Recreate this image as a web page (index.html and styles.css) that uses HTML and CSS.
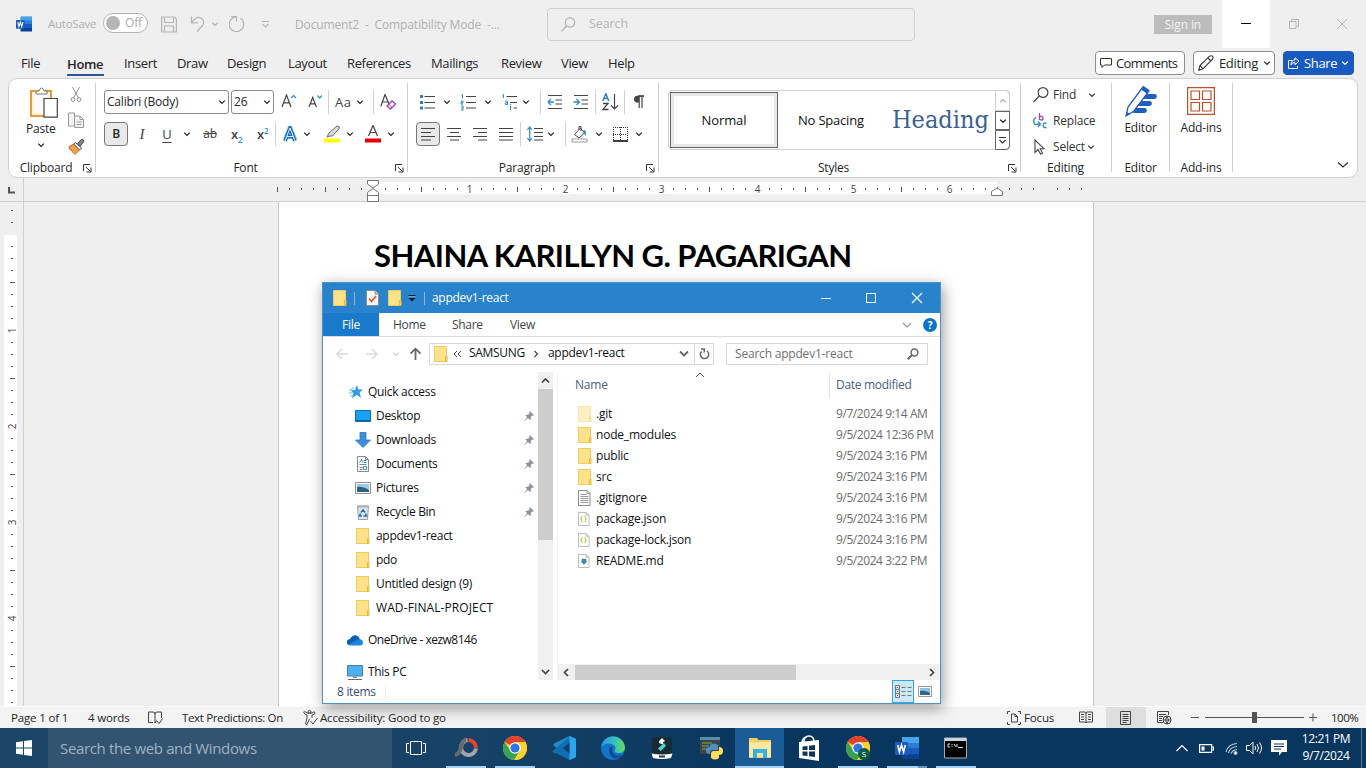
FILE: index.html
```html
<!DOCTYPE html>
<html lang="en">
<head>
<meta charset="utf-8">
<title>Document2 - Word</title>
<link rel="stylesheet" href="styles.css">
</head>
<body>
<svg class="defs" width="0" height="0">
  <defs>
    <symbol id="chev" viewBox="0 0 8 8"><path d="M1.2 2.6 4 5.4 6.8 2.6" fill="none" stroke="currentColor" stroke-width="1.3"/></symbol>
    <symbol id="folder" viewBox="0 0 14 16"><path d="M.5.5h12v15H.5z" fill="#ffe28a" stroke="#eccb5f"/><path d="M11.500 10.500h1.500v5h-1.500z" fill="#ffe28a" stroke="#e3b93c"/></symbol>
    <symbol id="pin" viewBox="0 0 12 12"><path d="M6.500 0 11 4.500 9.800 5.200 9 5 7.300 6.800 7.500 9 6.500 9.800 4.300 7.600.8 11 .3 10.500 3.400 6.800 1.500 4.800 2.400 4 4.500 4 6.200 2.200 5.900 1z" fill="#8b959d"/></symbol>
    <symbol id="launch" viewBox="0 0 9 9"><path d="M.5 7V.5H7M3 3l4.500 4.500M8 3.500V8H3.500" fill="none" stroke="#333"/></symbol>
    <symbol id="json" viewBox="0 0 13 15"><path d="M.5.500h8.500l3 3v11H.5z" fill="#fff" stroke="#b5b5b5"/><path d="M9 .5v3h3" fill="#e6e6e6" stroke="#b5b5b5"/><path d="M5 4.500q-1 0-1 1.200T3.200 7.500Q4 8 4 9.300T5 10.500M7 4.500q1 0 1 1.200T8.800 7.500Q8 8 8 9.300T7 10.500" fill="none" stroke="#b9c657" stroke-width="1.200"/></symbol>
    <symbol id="chrome" viewBox="0 0 24 24"><circle cx="12" cy="12" r="12" fill="#fdd12e"/><path d="M12 12 1.600 6A12 12 0 0 1 22.400 6z" fill="#e5402f"/><path d="M1.600 6A12 12 0 0 0 11 24l6-9.500L7 14z" fill="#35a353"/><path d="M12 6h10.400A12 12 0 0 1 11.500 24l5.700-9z" fill="#fdd12e"/><circle cx="12" cy="12" r="5.800" fill="#fff"/><circle cx="12" cy="12" r="4.600" fill="#3173e0"/></symbol>
    <symbol id="word" viewBox="0 0 24 24"><path d="M7 1h17v22H7z" fill="#2b7cd3"/><path d="M7 1h17v6H7z" fill="#45a4ea"/><path d="M7 12h17v6H7z" fill="#185abd"/><path d="M7 18h17v5H7z" fill="#103f91"/><rect y="6" width="13" height="13" rx="1" fill="#1a5dbe"/><path d="m2.700 9 1.700 7 2.100-7 2.100 7 1.700-7" fill="none" stroke="#fff" stroke-width="1.600"/></symbol>
  </defs>
</svg>

<header class="titlebar">
  <span></span>
  <svg width="16" height="16"><use href="#word"/></svg>
  <span class="dim autosave">AutoSave</span>
  <span class="toggle"><i></i><b>Off</b></span>
  <svg width="16" height="17" viewBox="0 0 16 17" fill="none" stroke="#b5b5b5" stroke-width="1.200"><path d="M.6 1h12.800l2 2v13H.6zM3.500 1v5.500h9V1M3.500 16v-6h9v6"/></svg>
  <svg width="16" height="17" viewBox="0 0 16 17" fill="none" stroke="#b5b5b5" stroke-width="1.200"><path d="M1.500.5v6.300h6.300M1.500 6.500l4-4a5 5 0 0 1 7 7L7 15.500"/></svg>
  <svg width="8" height="8" class="dim"><use href="#chev"/></svg>
  <svg width="17" height="17" viewBox="0 0 17 17" fill="none" stroke="#b5b5b5" stroke-width="1.200"><path d="M2 .5h5.500v5M11.500 2.200A7.300 7.300 0 1 1 7.500 1"/></svg>
  <svg width="9" height="8" viewBox="0 0 9 8" fill="none" stroke="#b5b5b5" stroke-width="1.200"><path d="M1 1.500h7M1.500 4l3 3 3-3"/></svg>
  <span class="dim doc-name">Document2&nbsp; -&nbsp; Compatibility Mode&nbsp; -...</span>
  <div class="search"><svg width="15" height="15" viewBox="0 0 15 15" fill="none" stroke="#b0b0b0" stroke-width="1.200"><circle cx="9" cy="5.500" r="4.700"/><path d="M5.500 9 .5 14.300"/></svg><span>Search</span></div>
  <span class="signin">Sign in</span>
  <span class="winbtn on"><svg width="12" height="12"><path d="M1 5.500h10" stroke="#000"/></svg></span>
  <span class="winbtn"><svg width="12" height="12" fill="none" stroke="#b5b5b5"><path d="M1.500 3.500h6.500v7H1.500zM3.500 3V1.500h7v7H9"/></svg></span>
  <span class="winbtn"><svg width="12" height="12" stroke="#b5b5b5"><path d="m1 1 10 10M11 1 1 11"/></svg></span>
</header>

<nav class="tabs">
  <span></span><span class="t1">File</span><span class="active">Home</span><span>Insert</span><span>Draw</span><span>Design</span><span>Layout</span><span>References</span><span>Mailings</span><span>Review</span><span>View</span><span>Help</span>
  <button class="pill comments"><svg width="12" height="12" viewBox="0 0 12 12" fill="none" stroke="#333"><path d="M.5 1.500h11v6.500H4.500l-2.500 2.500V8H.5z"/></svg>Comments</button>
  <button class="pill editing"><svg width="16" height="16" viewBox="0 0 16 16" fill="none" stroke="#333" stroke-width="1.100"><path d="M.8 15.200 2 10.500 11.500 1.200q2-1 3 0t0 3L5 13.800zM10 3l3 3M2 10.500l3 3.300"/></svg>Editing<svg width="8" height="8"><use href="#chev"/></svg></button>
  <button class="pill share"><svg width="12" height="12" viewBox="0 0 12 12" fill="none" stroke="#fff"><path d="M4 3.500H.5v8h9V9M7 .8l4 3.400-4 3.500V5.500Q4 5 3 8q0-5 4-5z"/></svg>Share<svg width="8" height="8"><use href="#chev"/></svg></button>
</nav>

<section class="ribbon">
  <div class="group clipboard">
    <div class="clip-body">
      <div class="paste">
        <svg width="28" height="31" viewBox="0 0 28 31"><path d="M1 4h20v25H1z" fill="#fbf1e0" stroke="#e39a3b" stroke-width="2"/><path d="M4 6.500h15V26H4z" fill="#fafafa"/><path d="M6 7V4h3q1-3 2.500-3T14 4h3v3z" fill="#fff" stroke="#777"/><path d="M14 11.500h13.300v18.700H14z" fill="#fff" stroke="#444" stroke-width="1.200"/></svg>
        <span>Paste</span>
        <svg width="8" height="8"><use href="#chev"/></svg>
      </div>
      <div class="clip-side">
        <svg width="16" height="17" viewBox="0 0 16 17" fill="none" stroke="#8d8d8d"><path d="M4.500 1 10.500 12M11.500 1l-6 11"/><circle cx="5" cy="13.500" r="1.900"/><circle cx="11" cy="13.500" r="1.900"/></svg>
        <svg width="16" height="17" viewBox="0 0 16 17" fill="#f2f2f2" stroke="#999"><path d="M.5 1h6v13h-6z"/><path d="M6.500 4h5.500l3.500 3.500v8h-9zM12 4v3.500h3.500M8.500 10h5M8.500 12.500h5"/></svg>
        <svg width="17" height="17" viewBox="0 0 17 17"><path d="M1 8.500 6 6l6 5.500-5 4.800L4 13.500l-.5-1.500H2.200z" fill="#f5a04a" stroke="#c8691b"/><path d="m5.500 6 2-1.500 6 5.500-2 2z" fill="#fff" stroke="#444"/><path d="m9.500 5.800 4-4.500q2.500 0 2.300 2.200L12 8.300z" fill="#888" stroke="#444"/></svg>
      </div>
    </div>
    <footer><span>Clipboard</span><svg width="9" height="9"><use href="#launch"/></svg></footer>
  </div>

  <div class="group font">
    <div class="row font1">
      <div class="combo"><span>Calibri (Body)</span><svg width="8" height="8"><use href="#chev"/></svg></div>
      <div class="combo size"><span>26</span><svg width="8" height="8"><use href="#chev"/></svg></div>
      <svg width="16" height="16" viewBox="0 0 16 16" fill="none"><path d="m1 13 4.500-12L10 13M2.700 8.800h5.800" stroke="#444" stroke-width="1.200"/><path d="m10 4 2.500-2.500L15 4" stroke="#2f8bc9" stroke-width="1.200"/></svg>
      <svg width="16" height="16" viewBox="0 0 16 16" fill="none"><path d="m1 13 3.700-9.500L8.400 13M2.500 9.800h4.600" stroke="#444" stroke-width="1.200"/><path d="M9.500 1.500 11.700 4 14 1.500" stroke="#2f8bc9" stroke-width="1.200"/></svg>
      <i class="sep"></i>
      <span class="aa">Aa</span>
      <svg width="8" height="8"><use href="#chev"/></svg>
      <i class="sep"></i>
      <svg width="17" height="16" viewBox="0 0 17 16" fill="none"><path d="m.8 12.500 4.200-12 4.200 10M2.300 8h5.800" stroke="#444" stroke-width="1.200"/><path d="m7 12 5-5 3.500 3-5 5z" fill="#fff" stroke="#a045ad" stroke-width="1.300"/><path d="m8.700 10.300 3.500 3.200" stroke="#a045ad"/></svg>
    </div>
    <div class="row font2">
      <span class="sqbtn"><b>B</b></span>
      <span class="glyph it">I</span>
      <span class="glyph un">U</span>
      <svg width="8" height="8"><use href="#chev"/></svg>
      <span class="glyph st">ab</span>
      <span class="glyph xs">x<sub>2</sub></span>
      <span class="glyph xs">x<sup>2</sup></span>
      <i class="sep"></i>
      <svg width="16" height="16" viewBox="0 0 16 16" fill="none"><path d="m2 14.500 5-12.500 5 12.500M4 10.500h6" stroke="#8fc6ea" stroke-width="5"/><path d="m2 15 5-13 5 13M4 10.500h6" stroke="#1b6cb0" stroke-width="3.400"/><path d="m2 15 5-13 5 13M4 10.500h6" stroke="#fff" stroke-width=".9"/></svg>
      <svg width="8" height="8"><use href="#chev"/></svg>
      <svg width="17" height="18" viewBox="0 0 17 18"><path d="M0 13.500h16v4H0z" fill="#ff0"/><path d="m3 12 2-4 8-7q3 0 2.300 2.500L8.500 11H5.800z" fill="#ddd" stroke="#666"/></svg>
      <svg width="8" height="8"><use href="#chev"/></svg>
      <svg width="16" height="18" viewBox="0 0 16 18"><path d="M0 13.500h16v4H0z" fill="#e80000"/><path d="m3.500 11 4.500-10.500L12.500 11M5.200 7.500h5.600" fill="none" stroke="#444" stroke-width="1.200"/></svg>
      <svg width="8" height="8"><use href="#chev"/></svg>
    </div>
    <footer><span>Font</span><svg width="9" height="9"><use href="#launch"/></svg></footer>
  </div>

  <div class="group para">
    <div class="row para1">
      <svg width="17" height="16" viewBox="0 0 17 16"><path d="M5.500 2.500H16M5.500 8.500H16M5.500 14H16" stroke="#444" stroke-width="1.200"/><path d="M1 1h3v3H1zM1 7h3v3H1zM1 12.500h3v3H1z" fill="#2f7fba"/></svg>
      <svg width="8" height="8"><use href="#chev"/></svg>
      <svg width="17" height="17" viewBox="0 0 17 17"><path d="M6 2.500h10M6 8.500h10M6 14h10" stroke="#444" stroke-width="1.200"/><path d="m1.500 1 1-.5V4.500M1 7h2v1.500H1V10h2.200M1 12h2v4H1M1.200 14H3" stroke="#2f8bc9" fill="none"/></svg>
      <svg width="8" height="8"><use href="#chev"/></svg>
      <svg width="17" height="17" viewBox="0 0 17 17"><path d="M4.500 2.500H15M8 8.500h7M11.500 14H15" stroke="#444" stroke-width="1.200"/><path d="m.5 1 1-.5V4M3 7h2.500v3.500H3.300V8.800h2M8.500 12v4M8.500 10v1" stroke="#2f8bc9" fill="none"/></svg>
      <svg width="8" height="8"><use href="#chev"/></svg>
      <i class="sep"></i>
      <svg width="16" height="16" viewBox="0 0 16 16" fill="none"><path d="M1 1.500h14M8.500 6H15M8.500 10H15M1 14.500h14" stroke="#444" stroke-width="1.200"/><path d="M7 8H1.500M4 5 1 8l3 3" stroke="#2f8bc9" stroke-width="1.300"/></svg>
      <svg width="16" height="16" viewBox="0 0 16 16" fill="none"><path d="M1 1.500h14M8.500 6H15M8.500 10H15M1 14.500h14" stroke="#444" stroke-width="1.200"/><path d="M.5 8H6M3.500 5l3 3-3 3" stroke="#2f8bc9" stroke-width="1.300"/></svg>
      <i class="sep"></i>
      <svg width="17" height="18" viewBox="0 0 17 18" fill="none"><path d="M.8 8 3.800.8 6.800 8M1.800 5.500h4" stroke="#2f7fba" stroke-width="1.500"/><path d="M1 10.500h5l-5 6h5.500" stroke="#444" stroke-width="1.300"/><path d="M12.500 1v15M9 12.500l3.500 3.500 3.500-3.500" stroke="#444" stroke-width="1.200"/></svg>
      <i class="sep"></i>
      <svg width="12" height="14" viewBox="0 0 12 14"><path d="M6 7.500Q1 8 1 4.200T5.500.800h5.500v1H6z" fill="#444"/><path d="M6.200 1v12M9 1v12M5 .9h6" stroke="#444" stroke-width="1.200"/></svg>
    </div>
    <div class="row para2">
      <span class="sqbtn"><svg width="16" height="16" stroke="#444" stroke-width="1.200"><path d="M1 2.500h14M1 6.500h10M1 10.500h14M1 14h10"/></svg></span>
      <svg width="15" height="16" stroke="#444" stroke-width="1.200"><path d="M0 2.500h14M3 6.500h9M0 10.500h14M3 14h9"/></svg>
      <svg width="15" height="16" stroke="#444" stroke-width="1.200"><path d="M0 2.500h14M5 6.500h9M0 10.500h14M5 14h9"/></svg>
      <svg width="15" height="16" stroke="#444" stroke-width="1.200"><path d="M0 2.500h14M0 6.500h14M0 10.500h14M0 14h14"/></svg>
      <i class="sep"></i>
      <svg width="17" height="16" viewBox="0 0 17 16" fill="none"><path d="M7 2.500h9M7 6.500h9M7 10.500h9M7 14h9" stroke="#444" stroke-width="1.200"/><path d="M2.700 1v14M.3 4l2.400-3 2.400 3M.3 12l2.400 3 2.400-3" stroke="#2f8bc9" stroke-width="1.200"/></svg>
      <svg width="8" height="8"><use href="#chev"/></svg>
      <i class="sep"></i>
      <svg width="17" height="17" viewBox="0 0 17 17"><path d="M1 13h15v3H1z" fill="#fff" stroke="#999"/><path d="M3.500 8.500 9.500 2l4 5-5.500 5zM8 4V.5h2V5" fill="#fff" stroke="#444"/><path d="m12.500 4 2 .5.500 5.500-2.500-3z" fill="#2f7fba"/></svg>
      <svg width="8" height="8"><use href="#chev"/></svg>
      <svg width="16" height="16" viewBox="0 0 16 16"><path d="M1 1.500h14M1 8.500h14M1.500 1v13M8.500 1v13M15.500 1v13" stroke="#333" stroke-dasharray="1 1"/><path d="M1 15h15" stroke="#000" stroke-width="1.500"/></svg>
      <svg width="8" height="8"><use href="#chev"/></svg>
    </div>
    <footer><span>Paragraph</span><svg width="9" height="9"><use href="#launch"/></svg></footer>
  </div>

  <div class="group styles">
    <div class="gallery">
      <span class="style-normal">Normal</span>
      <span class="style-nospace">No Spacing</span>
      <span class="style-heading">Heading</span>
      <div class="gal-scroll">
        <span class="up"><svg width="8" height="8"><use href="#chev"/></svg></span>
        <span><svg width="8" height="8"><use href="#chev"/></svg></span>
        <span><svg width="9" height="8" viewBox="0 0 9 8" fill="none" stroke="#333" stroke-width="1.200"><path d="M1 1.500h7M1.500 4l3 3 3-3"/></svg></span>
      </div>
    </div>
    <footer><span>Styles</span><svg width="9" height="9"><use href="#launch"/></svg></footer>
  </div>

  <div class="group edit">
    <div class="edit-list">
      <svg width="16" height="16" viewBox="0 0 16 16" fill="none" stroke="#444" stroke-width="1.200"><circle cx="10" cy="5.500" r="4.900"/><path d="M6.300 9 .5 15"/></svg><span>Find</span><svg width="8" height="8"><use href="#chev"/></svg>
      <svg width="16" height="16" viewBox="0 0 16 16" fill="none" stroke-width="1.300"><path d="M6.500 0v7M6.500 4q3-2 3.500 1T6.500 6.500" stroke="#a045ad"/><path d="M13.500 10.500q-3-1.500-3.300 1.500t3.300 2.500M3 4q-4 3-1 7.500l5.500-.5M5 8.500 7.500 11 5 14" stroke="#2f8bc9"/></svg><span class="wide">Replace</span>
      <svg width="16" height="16" viewBox="0 0 16 16" fill="none" stroke="#444" stroke-width="1.100"><path d="M2 1v12.500l3-3 2.500 4.500 2-1-2.300-4.300H11z"/></svg><span class="sel">Select</span><svg width="8" height="8" class="selchev"><use href="#chev"/></svg>
    </div>
    <footer><span>Editing</span></footer>
  </div>
  <div class="group big editor">
    <svg width="32" height="33" viewBox="0 0 32 33"><path d="M17 11.500h12.500M12 18.500h12.500M9 25.500h10.500" stroke="#1f5fc0" stroke-width="4.800" stroke-linecap="round"/><path d="m1 31 2-9L18 2l6 4L9 26z" fill="#fff" stroke="#1f5fc0" stroke-width="1.300"/><path d="m16 4.500 2.500-3.500 6 4.200-2.500 3.500zM1 31l1-4 3.500 2z" fill="#1f5fc0"/></svg>
    <span>Editor</span>
    <footer><span>Editor</span></footer>
  </div>
  <div class="group big addins">
    <svg width="30" height="30" viewBox="0 0 30 30" fill="none" stroke="#b7512e" stroke-width="1.200"><path d="M1.600 1.600h26.800v26.800H1.600zM5 5h8.500v8.500H5zM16.500 5H25v8.500h-8.500zM5 16.500h8.500V25H5zM16.500 16.500H25V25h-8.500z"/></svg>
    <span>Add-ins</span>
    <footer><span>Add-ins</span></footer>
  </div>
  <div class="collapse"><svg width="12" height="8" viewBox="0 0 12 8" fill="none" stroke="#333" stroke-width="1.300"><path d="m1 1.500 5 4.500 5-4.500"/></svg></div>
</section>

<div class="hruler">
  <div class="corner"><svg width="8" height="8"><path d="M2 1v5.500h6" fill="none" stroke="#555" stroke-width="2"/></svg></div>
  <svg width="1342" height="24" viewBox="24 178 1342 24">
    <defs><pattern id="tk" x="277" y="178" width="96" height="24" patternUnits="userSpaceOnUse"><path d="M12 10h1v2h-1zM24 10h1v2h-1zM36 10h1v2h-1zM48 9h1v5h-1zM60 10h1v2h-1zM72 10h1v2h-1zM84 10h1v2h-1z" fill="#555"/></pattern></defs>
    <path d="M373 182h624v12H373z" fill="#fff"/>
    <path d="M277 187h1v5h-1z" fill="#555"/>
    <path d="M278 178h807v24H278z" fill="url(#tk)"/>
    <g class="rnum" text-anchor="middle"><text x="469.500" y="192.500">1</text><text x="565.500" y="192.500">2</text><text x="661.500" y="192.500">3</text><text x="757.500" y="192.500">4</text><text x="853.500" y="192.500">5</text><text x="949.500" y="192.500">6</text></g>
    <g fill="#fff" stroke="#777"><path d="M367.500 180.500h11v3.500l-5.500 4-5.500-4z"/><path d="M367.500 201.500v-9l5.500-4 5.500 4v9zM367.500 195.500h11"/><path d="M991.500 195.500v-4l5.500-3.500 5.500 3.500v4z"/></g>
  </svg>
</div>

<main class="workspace">
  <div class="vruler">
    <svg width="23" height="504" viewBox="0 202 23 504">
      <defs><pattern id="vt" x="0" y="234" width="23" height="96" patternUnits="userSpaceOnUse"><path d="M11 12h2v1h-2zM11 24h2v1h-2zM11 36h2v1h-2zM10 48h5v1h-5zM11 60h2v1h-2zM11 72h2v1h-2zM11 84h2v1h-2z" fill="#555"/></pattern></defs>
      <path d="M4 235h13v472H4z" fill="#fff"/>
      <path d="M0 203h23v504H0z" fill="url(#vt)"/>
      <g class="rnum" text-anchor="middle"><text transform="translate(16 330.500) rotate(-90)">1</text><text transform="translate(16 426.500) rotate(-90)">2</text><text transform="translate(16 522.500) rotate(-90)">3</text><text transform="translate(16 618.500) rotate(-90)">4</text></g>
    </svg>
  </div>
  <article class="page"><h1>SHAINA KARILLYN G. PAGARIGAN</h1></article>
</main>

<div class="status">
  <span></span><span class="s1">Page 1 of 1</span><span class="s2">4 words</span>
  <svg width="15" height="14" viewBox="0 0 15 14" fill="none" stroke="#444"><path d="M5 11.500H.5V1H5q2 0 2 2v9q0-1.500 1.500-1.500M7 3q0-2 2-2h4.500v6M8.500 9.500l2.500 3 3.500-5"/></svg>
  <span class="s3">Text Predictions: On</span>
  <svg width="15" height="15" viewBox="0 0 15 15" fill="none" stroke="#444"><circle cx="6.500" cy="2" r="1.500"/><path d="M.5 2Q2 1 4 3h5q2-2 3-.5T9 5v3M.5 2.500Q2 4.500 4 5v3l-1.500 6 1.500.5L6.500 9M7.500 11l2.500 3 4.500-6"/></svg>
  <span class="s4">Accessibility: Good to go</span>
  <svg width="14" height="14" viewBox="0 0 14 14" fill="none" stroke="#444"><path d="M3 .5H.5V3M11 .5h2.500V3M3 13.500H.5V11M11 13.500h2.500V11M4.500 3h3.500l2.500 2.500V11h-6zM8 3v2.500h2.500"/></svg>
  <span class="s5">Focus</span>
  <svg width="14" height="13" viewBox="0 0 14 13" fill="none" stroke="#444"><path d="M.5 1H6q1 .5 1 1.500Q7 1 8 1h5.500v10H8l-1 1-1-1H.5zM7 2v10M2 3.500h3M2 6h3M2 8.500h3M9 3.500h3M9 6h3M9 8.500h3"/></svg>
  <span class="view-on"><svg width="12" height="14" viewBox="0 0 12 14" fill="none" stroke="#444"><path d="M.5.5h10v13H.5zM2.500 3.500h6M2.500 5.500h6M2.500 7.500h6M2.500 9.500h6M2.500 11.500h4"/></svg></span>
  <svg width="15" height="14" viewBox="0 0 15 14" fill="none" stroke="#444"><path d="M6 11.500H.5V.5h11V4M2 3.500h7M2 5.500h4M2 7.500h3M2 9.500h3"/><circle cx="10" cy="9" r="4"/><path d="M6 9h8M10 5q-3 4 0 8 3-4 0-8"/></svg>
  <svg width="127" height="13" viewBox="0 0 127 13"><path d="M0 6.500h8M118 6.500h8M122 2.500v8M14 6.500h99" stroke="#555"/><path d="M61 1h5v11h-5z" fill="#555"/></svg>
  <span class="s6">100%</span>
</div>

<footer class="taskbar">
  <span class="start"><svg width="17" height="16" viewBox="0 0 17 16" fill="#fff"><path d="M0 2.300 7 1.300V7.500H0zM8 1.100 16 0v7.500H8zM0 8.500h7v6.200l-7-1zM8 8.500h8V16l-8-1.100z"/></svg></span>
  <span class="tsearch">Search the web and Windows</span>
  <span class="tk first"><svg width="20" height="14" viewBox="0 0 20 14" fill="none" stroke="#fff"><path d="M4.500.5h11v13h-11zM3 2.500H.5v9H3M17 2.500h2.500v9H17"/></svg></span>
  <span class="tk run"><svg width="24" height="24" viewBox="0 0 24 24" fill="none" stroke-width="4"><path d="M14.500 4A8 8 0 0 1 22 12" stroke="#e8432d"/><path d="M22 12.500A7.500 7.500 0 1 1 13.500 4" stroke="#a2a5aa"/><path d="M12 4Q8 4.500 7 11T1 19" stroke="#6a6a6d"/></svg></span>
  <span class="tk run"><svg width="24" height="24"><use href="#chrome"/></svg></span>
  <span class="tk"><svg width="24" height="24" viewBox="0 0 24 24"><path d="M17.500 0 24 3v18l-6.500 3L1 9l2-2z" fill="#2489ca"/><path d="M17.500 24 1 15.500 3 17 17.500 6z" fill="#0f6db0"/><path d="m0 15.500 17.500-15V7L3 17.500z" fill="#1070b3"/><path d="M17.500 0 24 3v18l-6.500 3z" fill="#2ba5ee"/><path d="m11 12 6.500-5.500v11z" fill="#153f66"/></svg></span>
  <span class="tk"><svg width="24" height="24" viewBox="0 0 24 24"><defs><linearGradient id="eg"><stop stop-color="#249ce5"/><stop offset=".6" stop-color="#39c5b5"/><stop offset="1" stop-color="#67dc55"/></linearGradient></defs><circle cx="12" cy="12" r="12" fill="#1473c8"/><path d="M.2 11A12 12 0 0 1 24 11q0 6-6 6-6-.5-4-3Q16 10 11 8 5 6 .2 11" fill="url(#eg)"/><path d="M8.500 12q-2 7 5 10.500 5 .5 8-4-5 2.500-8.500-.5-3-3-1-6.500Q9 10 8.500 12" fill="#0e4b93"/></svg></span>
  <span class="tk"><svg width="24" height="24" viewBox="0 0 24 24"><rect x="2" y="1" width="20" height="20" rx="3" fill="#162b35"/><path d="m9 5 3-3 3 3-2 1.500v2L9 7z" fill="#fff"/><path d="m8 12.500 6-5.500 2 3-5.500 5z" fill="#51d8c2"/><path d="M1.500 17.500q10.500 2 21 0L21 22q-9 2-18 0z" fill="#fff"/><path d="M9 19.500h6v2H9z" fill="#333"/></svg></span>
  <span class="tk"><svg width="24" height="24" viewBox="0 0 24 24"><path d="M1 1h20v17H1z" fill="#3e4549"/><path d="M1 1h20v3H1z" fill="#548ea9"/><path d="M3 7h10M3 10h7M3 13h5" stroke="#618b4a" stroke-width="1.300"/><path d="M11 9q4-3 8 0v5h-6q-2 0-2 4-4 0-4-3 0-4 4-4z" fill="#4d8fc4"/><path d="M20 11q4 0 4 4t-4 4v3q-4 3-8 0v-4q0-3 3-3h5z" fill="#ffde58"/></svg></span>
  <span class="tk open"><svg width="24" height="24" viewBox="0 0 24 24"><path d="M1 2h8l1.500 2H23v18H1z" fill="#f4ce63"/><path d="M1 6h22v15H1z" fill="#fde6a0"/><path d="M5 22v-9h14v9h-4v-5H9v5z" fill="#32b4e6"/></svg></span>
  <span class="tk"><svg width="24" height="26" viewBox="0 0 24 26"><path d="m2 7 20-2v21L2 23z" fill="#fff"/><path d="M7 7Q7 1 12 1t5 6M5 7q1-5 5-5" fill="none" stroke="#fff" stroke-width="1.500"/><path d="M5.500 11.500l5-.6V15h-5zM12 10.700l6-.7v5h-6zM5.500 16.500h5V21l-5-.6zM12 16.500h6V22l-6-.8z" fill="#08365e"/></svg></span>
  <span class="tk run"><svg width="24" height="24" viewBox="0 0 24 24"><use href="#chrome"/><circle cx="18" cy="18" r="6" fill="#0d5c40"/><text x="18" y="21" class="badge" text-anchor="middle">S</text></svg></span>
  <span class="tk run two"><svg width="24" height="24"><use href="#word"/></svg></span>
  <span class="tk run"><svg width="24" height="22" viewBox="0 0 24 22"><path d="M.5 1h22v20H.5z" fill="#000" stroke="#aaa"/><path d="M1 1h21v3H1z" fill="#c9d4dc"/><path d="M6 7H4v3h2M8 7v1M8 9v1M10 7l2 3M13 7v3M14 10.500h5" stroke="#ddd" fill="none"/></svg></span>
  <span class="tray">
    <svg class="wide-gap" width="12" height="8" viewBox="0 0 12 8" fill="none" stroke="#fff" stroke-width="1.200"><path d="M.5 7 6 1.500 11.500 7"/></svg>
    <svg class="wide-gap" width="15" height="9" viewBox="0 0 15 9" fill="none" stroke="#fff" stroke-width="1.200"><path d="M.6.6h12v7.800H.600zM13 3h1.500v3H13"/><path d="M2.500 2.500h3v4h-3z" fill="#fff" stroke="none"/></svg>
    <svg width="13" height="13" viewBox="0 0 13 13" fill="none" stroke="#bccbd8"><path d="M1 10Q3 2 12 1.500M3.500 11Q5 5 12 4.500M6 11.500Q7.500 8 12 7.500" stroke-width="1.200"/><circle cx="10.500" cy="11" r="1.500" fill="#fff"/></svg>
    <svg width="17" height="14" viewBox="0 0 17 14" fill="none" stroke="#fff"><path d="M.5 4.500h3L7 1v12L3.500 9.500h-3zM9 5q1.500 2 0 4M11 3q3 4 0 8M13.500 1.500q4 5.500 0 11"/></svg>
    <svg width="16" height="16" viewBox="0 0 16 16"><path d="M0 0h16v12h-5l-3 3.500V12H0z" fill="#fff"/><path d="M3 4h10M3 6.500h10M3 9h7" stroke="#08365e"/></svg>
  </span>
  <span class="clock"><span>12:21 PM</span><span>9/7/2024</span></span>
</footer>

<section class="explorer">
  <header class="ex-title">
    <svg width="14" height="16"><use href="#folder"/></svg>
    <i></i>
    <svg width="13" height="16" viewBox="0 0 13 16"><path d="M.5.5H9l3.500 3.500v11.500H.5z" fill="#f6f6f6" stroke="#8a8a8a"/><path d="M9 .5V4h3.500" fill="#ccc" stroke="#8a8a8a"/><path d="m3 8.500 2.500 3L10 6" fill="none" stroke="#e0562b" stroke-width="1.600"/></svg>
    <svg width="14" height="16"><use href="#folder"/></svg>
    <svg width="8" height="8" viewBox="0 0 8 8"><path d="M.5 1h7v1.300h-7zM.5 4h7L4 7.500z" fill="#0b1a2b"/><path d="M.5 2.300h7V3h-7z" fill="#fff" opacity=".6"/></svg>
    <i></i>
    <span>appdev1-react</span>
    <svg width="12" height="12" stroke="#fff"><path d="M1 6.500h10"/></svg>
    <svg width="12" height="12" stroke="#fff" fill="none"><path d="M1.500 1.500h9v9h-9z"/></svg>
    <svg width="12" height="12" stroke="#fff" stroke-width="1.200"><path d="m1 1 10 10M11 1 1 11"/></svg>
  </header>
  <nav class="ex-tabs"><b>File</b><span>Home</span><span>Share</span><span>View</span>
    <svg width="10" height="8" viewBox="0 0 10 8" fill="none" stroke="#999" stroke-width="1.200"><path d="m1 2 4 4 4-4"/></svg>
    <em>?</em>
  </nav>
  <div class="ex-addr">
    <svg width="13" height="12" viewBox="0 0 13 12" fill="none" stroke="#dadada" stroke-width="1.500"><path d="M1 6h11M6 1 1 6l5 5"/></svg>
    <svg width="13" height="12" viewBox="0 0 13 12" fill="none" stroke="#dadada" stroke-width="1.500"><path d="M1 6h11M7 1l5 5-5 5"/></svg>
    <svg width="8" height="8" class="pale"><use href="#chev"/></svg>
    <svg width="13" height="14" viewBox="0 0 13 14" fill="none" stroke="#666" stroke-width="1.800"><path d="M6.500 13V2M1.500 6.700l5-5 5 5"/></svg>
    <div class="path">
      <svg width="14" height="16"><use href="#folder"/></svg>
      <svg width="9" height="8" viewBox="0 0 9 8" fill="none" stroke="#444"><path d="M4 1 1 4l3 3M8 1 5 4l3 3"/></svg>
      <span class="p1">SAMSUNG</span>
      <svg width="6" height="8" viewBox="0 0 6 8" fill="none" stroke="#444" stroke-width="1.200"><path d="m1.500 1 3 3-3 3"/></svg>
      <span class="p2">appdev1-react</span>
      <svg width="10" height="8" viewBox="0 0 10 8" fill="none" stroke="#666" stroke-width="1.800"><path d="m1 1.500 4 4 4-4"/></svg>
      <i><svg width="11" height="12" viewBox="0 0 11 12" fill="none" stroke="#666" stroke-width="1.500"><path d="M2.500 3.500A4.200 4.200 0 1 0 8 3M2 1h3.300v3.500"/></svg></i>
    </div>
    <div class="ex-search"><span>Search appdev1-react</span><svg width="12" height="12" viewBox="0 0 12 12" fill="none" stroke="#666"><circle cx="7.500" cy="4.500" r="3.400" stroke-width="1.500"/><path d="m5 7-4.300 4.300" stroke-width="2"/></svg></div>
  </div>
  <div class="ex-body">
    <ul class="nav">
      <li class="root qa"><svg width="14" height="14" viewBox="0 0 14 14"><path d="m8 0 1.500 4.500H14L10.500 7.500 12 13 7.800 9.800 3 13.500 4.500 8 1.500 5H6z" fill="#2e9be6"/><path d="M0 5h4M0 8h4M1 11h3M2.500 3h3" stroke="#6db9ec"/></svg><span>Quick access</span></li>
      <li><svg width="16" height="12" viewBox="0 0 16 12"><path d="M.5.5h15v11H.5z" fill="#18a0f5" stroke="#0f6fae"/><path d="M1 10.500h14" stroke="#0a5b96"/></svg><span>Desktop</span><svg width="11" height="11"><use href="#pin"/></svg></li>
      <li><svg width="16" height="16" viewBox="0 0 16 16"><path d="M5 .5h6V8h4.500L8 15.500.5 8H5z" fill="#3b8fdf" stroke="#2b75c0" stroke-width=".8"/></svg><span>Downloads</span><svg width="11" height="11"><use href="#pin"/></svg></li>
      <li><svg width="16" height="16" viewBox="0 0 16 16"><path d="M2.500.5h8l3 3v12h-11z" fill="#fff" stroke="#8a8a8a"/><path d="M10.500.5v3h3M4.500 8.500h7M4.500 11.500h3M4.500 13.500h3" stroke="#7a8a94" fill="none"/><path d="m4.500 6.500 2-3 1 3M8.500 4.500h3M8.500 6.500h3M8.500 10.500h3v3h-3z" stroke="#2c95b8" fill="none"/></svg><span>Documents</span><svg width="11" height="11"><use href="#pin"/></svg></li>
      <li><svg width="16" height="12" viewBox="0 0 16 12"><path d="M.5.5h15v11H.5z" fill="#fff" stroke="#8f8f8f"/><path d="M2 2h12v8H2z" fill="#9bc9ea"/><path d="M2 5q5-1 12 3v2H2z" fill="#2b607a"/></svg><span>Pictures</span><svg width="11" height="11"><use href="#pin"/></svg></li>
      <li><svg width="16" height="16" viewBox="0 0 16 16"><path d="m2.500 2 1 13.500h9L13.500 2z" fill="#dfe3e6" stroke="#9aa3a8"/><path d="M3 1.500h10v2H3z" fill="#aab1b6"/><path d="m6 8.500 2-2.500 2 2.500M10.500 9.500l1 2.500h-3M7 12H4.500l1-2.500" fill="none" stroke="#2172b8" stroke-width="1.500"/></svg><span>Recycle Bin</span><svg width="11" height="11"><use href="#pin"/></svg></li>
      <li><svg width="16" height="16"><use href="#folder"/></svg><span>appdev1-react</span></li>
      <li><svg width="16" height="16"><use href="#folder"/></svg><span>pdo</span></li>
      <li><svg width="16" height="16"><use href="#folder"/></svg><span>Untitled design (9)</span></li>
      <li><svg width="16" height="16"><use href="#folder"/></svg><span class="caps">WAD-FINAL-PROJECT</span></li>
      <li class="root"><svg width="16" height="11" viewBox="0 0 16 11"><path d="M4 10.500Q0 10.500 0 7.500t3-3.200Q5 0 8.500.5T12.500 4Q16 4.500 16 7.500t-3 3z" fill="#1589da"/><path d="M0 7Q0 4.500 3 4.300 5 0 8.500.5T12.500 4L6 7 1.500 9.500Q0 9 0 7" fill="#0c5fb2"/></svg><span class="tight">OneDrive - xezw8146</span></li>
      <li class="root"><svg width="16" height="15" viewBox="0 0 16 15"><path d="M.5.5h15v10.500H.5z" fill="#4ab2f0" stroke="#4f7f9c"/><path d="M6 11.500h4v1.500H6z" fill="#888"/><path d="M1 14.500h14" stroke="#5d6c74"/></svg><span>This PC</span></li>
    </ul>
    <div class="vscroll"><svg width="15" height="17" viewBox="0 0 15 17" fill="none" stroke="#444" stroke-width="1.700"><path d="m4 10.500 3.500-3.500 3.500 3.500"/></svg><i></i><svg width="15" height="17" viewBox="0 0 15 17" fill="none" stroke="#444" stroke-width="1.700"><path d="m4 7 3.500 3.500L11 7"/></svg></div>
    <div class="files">
      <div class="fhead"><span>Name</span><svg width="10" height="6" viewBox="0 0 10 6" fill="none" stroke="#555"><path d="m1 5 4-4 4 4"/></svg><b>Date modified</b></div>
      <div class="frow hidden"><svg width="14" height="16"><use href="#folder"/></svg><span>.git</span><time>9/7/2024 9:14 AM</time></div>
      <div class="frow"><svg width="14" height="16"><use href="#folder"/></svg><span>node_modules</span><time>9/5/2024 12:36 PM</time></div>
      <div class="frow"><svg width="14" height="16"><use href="#folder"/></svg><span>public</span><time>9/5/2024 3:16 PM</time></div>
      <div class="frow"><svg width="14" height="16"><use href="#folder"/></svg><span>src</span><time>9/5/2024 3:16 PM</time></div>
      <div class="frow"><svg width="13" height="16" viewBox="0 0 13 16"><path d="M.5.500h8.500l3 3v12H.5z" fill="#fff" stroke="#888"/><path d="M9 .5v3h3M2.500 4.500h6M2.500 6.500h8M2.500 8.500h8M2.500 10.500h8M2.500 12.500h8" fill="none" stroke="#999"/></svg><span>.gitignore</span><time>9/5/2024 3:16 PM</time></div>
      <div class="frow"><svg width="12" height="14"><use href="#json"/></svg><span>package.json</span><time>9/5/2024 3:16 PM</time></div>
      <div class="frow"><svg width="12" height="14"><use href="#json"/></svg><span>package-lock.json</span><time>9/5/2024 3:16 PM</time></div>
      <div class="frow"><svg width="12" height="14" viewBox="0 0 13 15"><path d="M.5.500h8.500l3 3v11H.5z" fill="#fff" stroke="#b5b5b5"/><path d="M9 .5v3h3" fill="#e6e6e6" stroke="#b5b5b5"/><path d="M4 5h5v3h1L6.500 11.500 3 8h1z" fill="#3f87ad"/></svg><span>README.md</span><time>9/5/2024 3:22 PM</time></div>
      <div class="hscroll"><svg width="17" height="15" viewBox="0 0 17 15" fill="none" stroke="#444" stroke-width="1.700"><path d="M10 4 6.500 7.500 10 11"/></svg><i></i><svg width="17" height="15" viewBox="0 0 17 15" fill="none" stroke="#444" stroke-width="1.700"><path d="m7 4 3.500 3.500L7 11"/></svg></div>
    </div>
  </div>
  <div class="ex-status"><span>8 items</span><i></i>
    <b><svg width="17" height="14" viewBox="0 0 17 14" fill="none" stroke="#777"><path d="M.5.500h4v12h-4zM.5 4.500h4M.5 8.500h4M6.500 2.500h4M12.500 2.500h4M6.500 6.500h4M12.500 6.500h4M6.500 10.500h4M12.500 10.500h4"/><path d="M2 2h1v1H2zM2 6h1v1H2zM2 10h1v1H2z" fill="#b23" stroke="none"/></svg></b>
    <svg width="14" height="11" viewBox="0 0 14 11"><path d="M.5.500h13v10H.5z" fill="#fff" stroke="#999"/><path d="M2 2h10v7H2z" fill="#8fbfe3"/><path d="M2 5q5-1 10 2v2H2z" fill="#33648c"/></svg>
  </div>
</section>
</body>
</html>
```
FILE: styles.css
```css
* { box-sizing: border-box; }
body { margin: 0; width: 1366px; height: 768px; overflow: hidden; display: flex; flex-direction: column; background: #efefef; color: #252525; font: 12px/16px "Open Sans", "Noto Sans", sans-serif; position: relative; white-space: nowrap; }
svg { display: block; flex: none; }
.defs { position: absolute; }
b, h1 { font-weight: 600; }
i, em { font-style: normal; }
button { font: inherit; color: inherit; margin: 0; }

.titlebar { height: 48px; flex: none; display: grid; align-items: center; grid-template-columns: 16px 32px 55px 58px 29px 21px 18px 32px 34px 252px 607px 68px 48px 48px 48px; }
.dim { color: #b0b0b0; }
.autosave { font-size: 11.5px; letter-spacing: -.25px; }
.toggle { width: 45px; height: 20px; margin-top: -2px; border: 1px solid #b3b3b3; border-radius: 10px; background: #fff; display: flex; align-items: center; gap: 5px; padding-left: 2px; color: #aaa; }
.toggle i { width: 14px; height: 14px; border-radius: 50%; background: #b5b5b5; }
.toggle b { font-weight: 400; font-size: 12px; letter-spacing: -.2px; }
.doc-name { font-size: 12px; letter-spacing: -.15px; padding-top: 2px; }
.search { width: 368px; height: 33px; border: 1px solid #d0d0d0; border-radius: 4px; display: flex; align-items: center; padding-left: 13px; gap: 13px; color: #b5b5b5; font-size: 12.5px; letter-spacing: -.1px; }
.signin { width: 58px; height: 19px; background: #bcbcbc; color: #f3f3f3; text-align: center; line-height: 19px; font-size: 12px; letter-spacing: -.1px; }
.winbtn { height: 48px; display: flex; align-items: center; justify-content: center; }
.winbtn.on { background: #fff; }

.tabs { height: 30px; flex: none; display: grid; align-items: center; grid-template-columns: 21px 46px 57px 53px 50px 61px 59px 84px 70px 60px 47px 487px 98px 90px 71px; font-size: 13px; letter-spacing: -.35px; }
.tabs .active { font-weight: 600; width: 37px; line-height: 20px; height: 22px; margin-top: 3px; border-bottom: 2px solid #2b579a; }
.pill { height: 24px; border: 1px solid #8d8d8d; border-radius: 4px; background: #fff; display: flex; align-items: center; padding: 0 4px; gap: 4px; letter-spacing: -.35px; }
.comments { width: 90px; letter-spacing: -.6px; }
.editing { width: 82px; gap: 5px; }
.share { width: 71px; background: #185abd; border-color: #185abd; color: #fff; }

.ribbon { height: 100px; flex: none; margin: 0 8px; border: 1px solid #d1d1d1; border-radius: 9px; background: #fff; display: flex; padding-top: 4px; letter-spacing: -.2px; }
.group { height: 93px; flex: none; background: linear-gradient(#cfcfcf, #cfcfcf) right top / 1px 89px no-repeat; display: flex; flex-direction: column; }
.group footer { margin-top: auto; height: 16px; display: flex; align-items: center; justify-content: center; letter-spacing: -.2px; }
.group footer span { flex: 1; text-align: center; }
.group footer svg { margin-right: 4px; }
.clipboard { width: 87px; }
.font { width: 312px; }
.para { width: 251px; }
.styles { width: 362px; }
.edit { width: 91px; }
.editor { width: 58px; }
.addins { width: 63px; }
.clip-body { display: flex; }
.paste { width: 48px; margin-left: 11px; padding: 4px 0 0 10px; }
.paste span { display: block; margin: 3px 0 3px -4px; }
.paste svg + span + svg { margin-left: 7px; margin-top: 4px; }
.clip-side { display: flex; flex-direction: column; gap: 9px; padding-top: 3px; }
.row { height: 24px; display: grid; align-items: center; margin-top: 7px; }
.row + .row { margin-top: 8px; }
.font1 { padding-left: 8px; grid-template-columns: 127px 50px 27px 20px 7px 21px 17px 7px 17px; }
.font2 { padding-left: 8px; grid-template-columns: 29px 25px 25px 18px 30px 26px 18px 8px 20px 21px 22px 19px 22px 8px; }
.para1 { padding-left: 11px; grid-template-columns: 24px 17px 24px 18px 20px 18px 7px 26px 22px 7px 22px 9px 12px; }
.para2 { padding-left: 8px; grid-template-columns: 31px 26px 26px 21px 7px 20px 18px 6px 24px 17px 23px 8px; }
.combo { width: 125px; height: 24px; border: 1px solid #8a8a8a; border-radius: 3px; display: flex; justify-content: space-between; align-items: center; padding: 0 2px 0 2px; }
.combo.size { width: 43px; }
.sep { width: 1px; height: 24px; background: #d1d1d1; }
.aa { font-size: 13px; letter-spacing: .5px; color: #444; }
.sqbtn { width: 24px; height: 24px; border: 1px solid #777; border-radius: 4px; background: #e9e9e9; display: flex; align-items: center; justify-content: center; }
.glyph { width: 18px; text-align: center; color: #444; font-size: 13px; }
.it { font-family: "Liberation Serif", serif; font-style: italic; font-size: 15px; }
.un { text-decoration: underline; text-underline-offset: 3px; }
.st { font-size: 12px; text-decoration: line-through; }
.xs { font-weight: 600; width: 16px; line-height: 14px; text-align: left; }
.xs sub, .xs sup { font-size: 8px; color: #2f8bc9; line-height: 0; }
.gallery { margin: 7px 0 0 9px; width: 342px; height: 60px; border: 1px solid #d0d0d0; border-radius: 4px; display: flex; align-items: center; padding-left: 1px; color: #111; font-size: 13px; }
.gallery > * { flex: none; }
.style-normal { width: 108px; height: 56px; border: 1px solid #666; box-shadow: inset 0 0 0 3px #e9e9e9; display: flex; align-items: center; justify-content: center; letter-spacing: -.1px; }
.style-nospace { margin-left: 20px; width: 94px; letter-spacing: -.2px; }
.style-heading { width: 103px; font: 25px/30px "DejaVu Serif Condensed", "DejaVu Serif", serif; font-stretch: condensed; color: #3b6192; letter-spacing: 0; }
.gal-scroll { width: 15px; height: 60px; display: grid; grid-template-rows: 21px 19px 20px; }
.gal-scroll span { border: 1px solid #666; display: flex; align-items: center; justify-content: center; }
.gal-scroll span:last-child { border-bottom-right-radius: 4px; }
.gal-scroll .up { border-color: #d0d0d0; border-top-right-radius: 4px; color: #aaa; }
.up svg { transform: rotate(180deg); }
.edit-list { padding: 3px 0 0 12px; display: grid; grid-template-columns: 20px 35px 20px; grid-template-rows: 18px 34px 18px; align-items: center; color: #333; }
.edit-list .wide { grid-column: span 2; }
.selchev { margin-left: -1px; }
.edit footer { padding-right: 2px; }
.big { align-items: center; padding: 2px 1px 0 0; }
.addins { padding-top: 3px; }
.big > span { margin-top: 2px; }
.big > svg { height: 33px; }
.big.addins > svg { height: 30px; margin-right: 1px; }
.big.addins > span { margin-top: 4px; }
.collapse { flex: 1; display: flex; align-items: flex-end; justify-content: flex-end; padding: 0 8px 8px 0; }

.hruler { height: 24px; flex: none; display: flex; border-bottom: 1px solid #cfcfcf; }
.corner { width: 24px; border-right: 1px solid #cfcfcf; padding: 8px 0 0 7px; }
.rnum { font: 10px "Open Sans", sans-serif; fill: #444; paint-order: stroke; stroke: #fff; stroke-width: 3px; }
.workspace { height: 504px; flex: none; display: flex; }
.vruler { width: 24px; border-right: 1px solid #cfcfcf; }
.page { margin-left: 254px; width: 816px; background: #fff; border: solid #c6c6c6; border-width: 0 1px; padding: 33px 0 0 95px; }
h1 { margin: 0; font: 700 31px/40px Lato, sans-serif; color: #000; letter-spacing: -.54px; }

.status { height: 22px; flex: none; background: #f3f3f3; border-top: 1px solid #fbfbfb; display: grid; align-items: center; grid-template-columns: 11px 77px 60px 34px 121px 17px 687px 17px 55px 27px 51px 34px 140px 36px; font-size: 11.5px; letter-spacing: -.15px; }
.s3 { letter-spacing: -.35px; }
.s6 { letter-spacing: -.5px; }
.view-on { width: 40px; height: 21px; background: #dedede; display: flex; align-items: center; justify-content: center; }

.taskbar { height: 40px; flex: none; display: flex; background: linear-gradient(90deg, #1c4568, #174267 35%, #08365e 55%); color: #fff; }
.start { width: 48px; display: flex; align-items: center; justify-content: center; }
.tsearch { width: 344px; background: #335471; color: #9fb1c1; font-size: 15px; line-height: 40px; padding-left: 12px; letter-spacing: -.35px; }
.tk { width: 49px; display: flex; align-items: center; justify-content: center; }
.tk.first { padding-right: 2px; }
.tk.run { background: linear-gradient(#a5d3f8, #a5d3f8) 5px 38px / 40px 2px no-repeat; }
.tk.two { background-image: linear-gradient(90deg, #a5d3f8 31px, #6d93b5 31px); }
.tk.open { background: linear-gradient(#a5d3f8, #a5d3f8) 0 38px / 49px 2px no-repeat #1b5c96; }
.badge { font: 8px "Open Sans", sans-serif; fill: #fff; }
.tray { flex: 1; display: flex; align-items: center; justify-content: flex-end; gap: 8px; padding-right: 15px; }
.tray .wide-gap { margin-right: 3px; }
.clock { width: 60px; border-right: 1px solid #5d7a93; display: flex; flex-direction: column; align-items: center; padding: 2px 11px 0 0; line-height: 17px; margin-right: 4px; letter-spacing: -.4px; }

.explorer { position: absolute; left: 322px; top: 282px; width: 619px; height: 422px; border: 1px solid #4f92c8; background: #fff; color: #111; box-shadow: 2px 4px 14px rgba(0, 0, 0, .4); display: flex; flex-direction: column; letter-spacing: -.3px; }
.ex-title { height: 30px; flex: none; background: #2882cc; color: #fff; display: grid; align-items: center; padding-left: 10px; grid-template-columns: 21px 12px 22px 20px 16px 8px 388px 45px 46px 12px; }
.ex-title i { width: 1px; height: 13px; background: #8bb5dc; }
.ex-tabs { height: 24px; flex: none; border-bottom: 1px solid #dcdcdc; display: grid; grid-template-columns: 70px 59px 58px 392px 21px 14px; align-items: center; color: #444; letter-spacing: -.3px; }
.ex-tabs b { width: 56px; height: 23px; line-height: 23px; background: #1979ca; color: #fff; text-align: center; font-weight: 400; }
.ex-tabs em { width: 14px; height: 14px; border-radius: 50%; background: #0f74c8; color: #fff; text-align: center; font-weight: 700; font-size: 10px; line-height: 14px; }
.ex-addr { height: 34px; margin-bottom: 1px; flex: none; display: grid; align-items: center; padding-left: 13px; grid-template-columns: 29px 27px 17px 20px 297px 202px; }
.pale { color: #ccc; }
.path { width: 285px; height: 22px; border: 1px solid #d9d9d9; display: grid; align-items: center; padding-left: 4px; grid-template-columns: 19px 16px 64px 15px 131px 15px 19px; }
.path span { margin-top: -2px; }
.path i { height: 20px; border-left: 1px solid #d9d9d9; display: flex; align-items: center; justify-content: center; }
.ex-search { height: 22px; border: 1px solid #d9d9d9; display: flex; align-items: center; justify-content: space-between; padding: 0 8px; color: #707070; letter-spacing: -.2px; }
.ex-body { height: 308px; flex: none; display: flex; }
.nav { width: 215px; height: 308px; margin: 0; padding: 8px 0 0; list-style: none; overflow: hidden; }
.nav li { height: 24px; display: grid; align-items: center; padding-left: 32px; grid-template-columns: 21px 148px 11px; }
.nav .root { padding-left: 24px; margin-top: 8px; }
.nav .qa { margin-top: 0; padding-left: 26px; grid-template-columns: 19px 148px; }
.caps { letter-spacing: .1px; }
.tight { letter-spacing: -.5px; }
.vscroll { width: 15px; background: #f0f0f0; display: flex; flex-direction: column; }
.vscroll i { height: 151px; background: #cdcdcd; margin-bottom: auto; }
.files { margin-left: 5px; width: 382px; display: flex; flex-direction: column; box-shadow: -2px 0 0 -1px #f0f0f0; }
.fhead { height: 31px; flex: none; display: grid; grid-template-columns: 120px 134px 112px; padding-left: 17px; color: #4c607a; letter-spacing: -.2px; }
.fhead span, .fhead b { font-weight: 400; line-height: 26px; height: 26px; }
.fhead b { border-left: 1px solid #e3e3e3; padding-left: 6px; letter-spacing: -.3px; }
.frow { height: 21px; display: grid; align-items: center; padding-left: 20px; grid-template-columns: 18px 240px 104px; letter-spacing: -.2px; }
.frow time { color: #6d6d6d; letter-spacing: -.43px; }
.frow.hidden svg { opacity: .5; }
.hscroll { height: 16px; background: #f0f0f0; margin-top: auto; display: flex; align-items: center; }
.hscroll i { width: 221px; height: 15px; background: #cdcdcd; margin-right: auto; }
.ex-status { flex: 1; display: grid; align-items: center; padding-left: 14px; grid-template-columns: 48px 507px 26px 14px; color: #3a4d75; }
.ex-status i { width: 1px; height: 12px; background: #eee; }
.ex-status b { width: 22px; height: 23px; border: 1px solid #37a5d5; background: #cbe8f6; display: flex; align-items: center; justify-content: center; }
```
